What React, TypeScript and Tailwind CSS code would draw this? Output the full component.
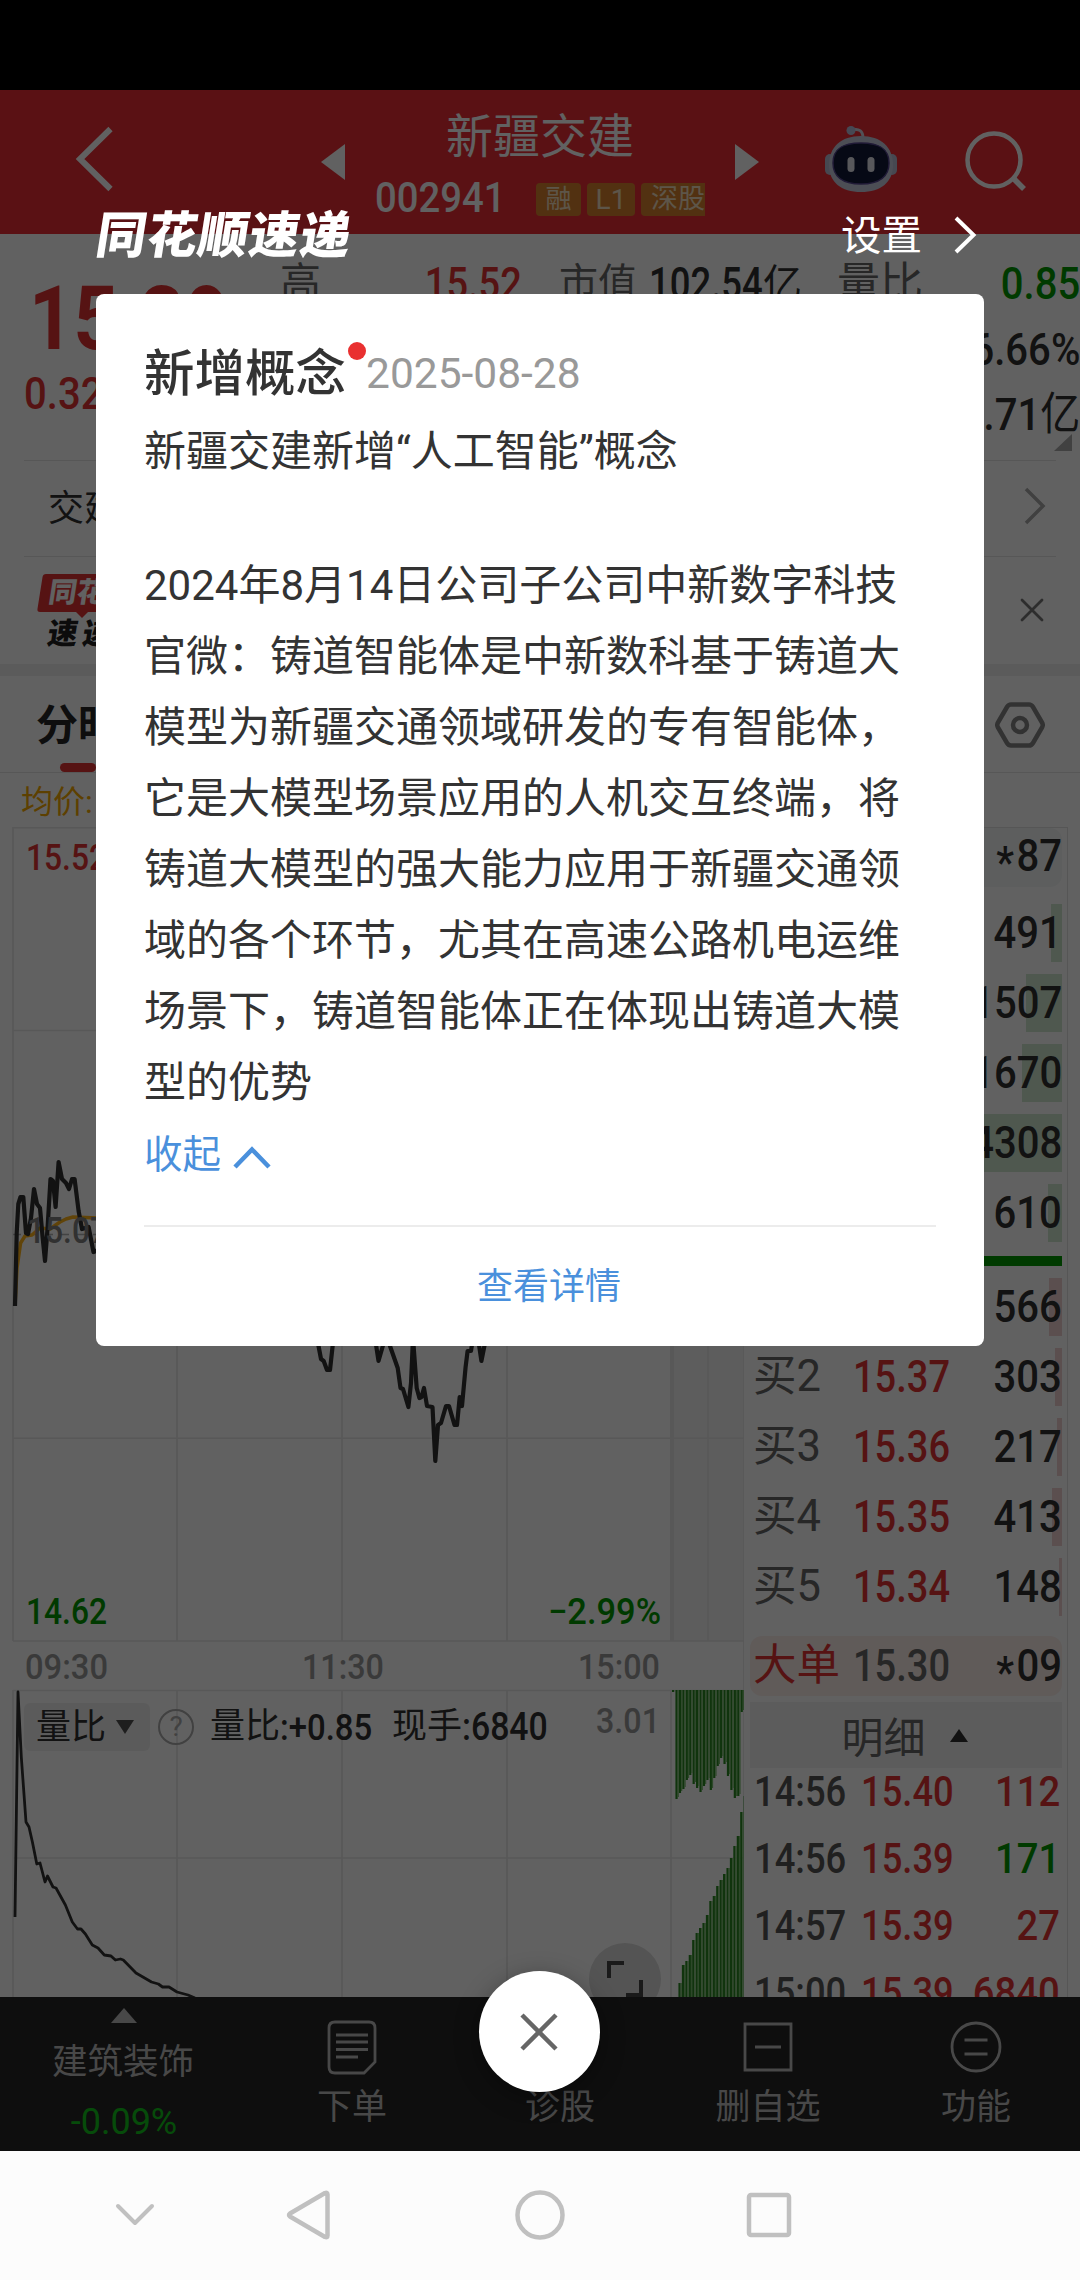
import { ReactNode } from "react"
import clsx from "clsx"

const INK = "#303030"
const RED = "#e23434"
const GREEN = "#009900"

type OrderRow = {
    label?: string
    price?: string
    volume: string
    bar: number
}

const SELLS: OrderRow[] = [
    { volume: "491", bar: 11 },
    { volume: "1507", bar: 36 },
    { volume: "1670", bar: 40 },
    { volume: "4308", bar: 100 },
    { volume: "610", bar: 14 },
]

const BUYS: OrderRow[] = [
    { volume: "566", bar: 13 },
    { label: "买2", price: "15.37", volume: "303", bar: 7 },
    { label: "买3", price: "15.36", volume: "217", bar: 5 },
    { label: "买4", price: "15.35", volume: "413", bar: 10 },
    { label: "买5", price: "15.34", volume: "148", bar: 3 },
]

const TICKS = [
    { time: "14:56", price: "15.40", volume: "112", up: true },
    { time: "14:56", price: "15.39", volume: "171", up: false },
    { time: "14:57", price: "15.39", volume: "27", up: true },
    { time: "15:00", price: "15.39", volume: "6840", up: true },
]

const PRICE_OPEN =
    "15,1306 16.7,1233 18.3,1204 20.5,1197 23.3,1197 26,1233 28,1234 31,1218 34,1189 37,1204 40,1208 42.5,1236 45,1261 47.5,1229 50.5,1179 53,1181 55.6,1207 58.6,1162 62,1179 66,1183 69,1189 72,1179 74.6,1179 78.6,1211 82,1229 88.6,1227 93.5,1252 98,1250"
const PRICE_LOWS = [
    "317,1338 321,1359 323.7,1361 327,1370 330,1370 333.5,1338",
    "375,1338 378.5,1361 386,1335 390,1346 397.7,1368 400.5,1388 403,1389 408.4,1407 411,1383 413,1338 416.7,1388 419.4,1398 421.5,1397 424,1388 427,1406 432.5,1407 435.3,1461 438,1425 441,1423 446,1406 449,1406 454.5,1425 457,1425 459.7,1397 462,1406 465.6,1367 467.6,1351 471,1351 473,1338",
    "478,1338 481.4,1361 486,1338",
]
const AVERAGE =
    "15,1306 17,1268 20.6,1243 25,1236 32,1235 40,1228 50,1229 60,1222 66,1219 73,1217 98,1218"
const VOLUME_RATIO =
    "15,1917 18,1692 21.3,1757 26,1822 29,1827 32.4,1842 36.8,1864 40,1863 45,1882 47.5,1876 53,1887 56,1888 65.4,1905 72.3,1922 77.5,1929 81,1929 85.4,1934 92.3,1945 98,1948 104.3,1955 111,1956 115.4,1960 120.5,1959 123.3,1960 136,1973 151.5,1982 158.4,1984 162.5,1987 169,1987 177,1992 188,1995 195,1998"

const TOP_BARS = [1692, 1799, 1793, 1789, 1780, 1775, 1784, 1788, 1792, 1786, 1780, 1790, 1778, 1766, 1758, 1764, 1776, 1790, 1798, 1796, 1712]
const BOTTOM_BARS = [1997, 1983, 1965, 1961, 1955, 1940, 1933, 1928, 1923, 1915, 1901, 1896, 1886, 1880, 1874, 1868, 1858, 1846, 1836, 1812, 1796]

const Num = ({ children, className, decimal }: { children: ReactNode; className?: string; decimal?: boolean }) => (
    <span className={clsx("inline-block font-medium whitespace-nowrap", decimal ? "scale-x-[0.845]" : "scale-x-[0.89]", className)}>
        {children}
    </span>
)

const Star = () => <span className="relative top-[7px] mr-[3px]">*</span>

const Header = () => (
    <header className="flex h-[144px] shrink-0 bg-[#ed2d35] text-white">
        <svg className="mt-[35px] ml-[74px] h-[68px] w-[40px]" viewBox="0 0 40 68" fill="none" stroke="currentColor" strokeWidth="6">
            <path d="M36.5 4 6 34l30.500 30" />
        </svg>
        <svg className="mt-[54px] ml-[207px] h-[36px] w-[24px]" viewBox="0 0 24 36" fill="currentColor">
            <path d="M24 0v36L0 18z" />
        </svg>
        <div className="ml-[30px] flex w-[330px] flex-col">
            <h1 className="mt-[21px] text-center text-[47px] leading-[52px]">新疆交建</h1>
            <div className="mt-[19px] flex h-[35px] items-center">
                <div className="w-[161px]">
                    <Num className="origin-left text-[43px] leading-[34px]">002941</Num>
                </div>
                <div className="flex gap-[6px] text-[26px] leading-[33px] text-[#f3dfc0]">
                    <span className="w-[45px] rounded-[4px] bg-[#d8822e] text-center">融</span>
                    <span className="w-[48px] rounded-[4px] bg-[#d8822e] text-center text-[28px]">L1</span>
                    <span className="w-[64px] rounded-l-[4px] bg-[#d8822e] pl-[10px] text-[27px] whitespace-nowrap">深股</span>
                </div>
            </div>
        </div>
        <svg className="mt-[54px] ml-[30px] h-[36px] w-[24px]" viewBox="0 0 24 36" fill="currentColor">
            <path d="M0 0v36l24-18z" />
        </svg>
        <svg className="mt-[35px] ml-[66px] h-[68px] w-[72px]" viewBox="0 0 72 68">
            <path d="M27 5c7-2 11 1 11 8" fill="none" stroke="#d5d5e4" strokeWidth="3" />
            <circle cx="26" cy="5.500" r="4.500" fill="#b9bfdc" />
            <rect x="0" y="29" width="10" height="21" rx="5" fill="#b9bdd6" />
            <rect x="62" y="29" width="10" height="21" rx="5" fill="#b9bdd6" />
            <path d="M36 11c20 0 32 11 32 29 0 17-12 27-32 27S4 57 4 40c0-18 12-29 32-29z" fill="#c9cce0" />
            <path d="M36 18c19 0 28 6 28 20 0 13-9 21-28 21S8 51 8 38c0-14 9-20 28-20z" fill="#101838" stroke="#55468f" strokeWidth="1.500" />
            <rect x="22.500" y="32" width="7" height="15" rx="3.500" fill="#e8e8ee" />
            <rect x="42.500" y="32" width="7" height="15" rx="3.500" fill="#e8e8ee" />
        </svg>
        <svg className="mt-[38px] ml-[68px] h-[64px] w-[62px]" viewBox="0 0 62 64" fill="none" stroke="currentColor" strokeWidth="4.500">
            <circle cx="29" cy="32" r="26.500" />
            <path d="m48 50 11 11" strokeWidth="5.500" />
        </svg>
    </header>
)

const Quote = () => (
    <section className="flex h-[226px] shrink-0 pt-[17px]">
        <div className="w-[280px] text-[#e23434]">
            <div className="mt-[28px] pl-[29px]">
                <span className="inline-block origin-left scale-x-[0.87] text-[89px] leading-[80px] font-bold">15.39</span>
            </div>
            <Num className="mt-[3px] ml-[24px] origin-left text-[45px] leading-[64px]">0.32</Num>
        </div>
        <div className="flex h-[65px] w-[242px] items-center justify-between text-[41px] text-[#666]">
            高
            <Num decimal className="origin-right text-[45px] text-[#e23434]">15.52</Num>
        </div>
        <div className="ml-[37px] flex h-[65px] items-center text-[39px] whitespace-nowrap text-[#666]">
            市值
            <div className="flex w-[200px] items-center pl-[12px] text-[#303030]">
                <div className="w-[114px]">
                    <span className="inline-block origin-left scale-x-[0.81] text-[45px] font-medium">102.54</span>
                </div>
                <span className="pt-[2px] text-[39px]">亿</span>
            </div>
        </div>
        <div className="flex flex-1 flex-col">
            <div className="flex h-[65px] items-center justify-between text-[43px] text-[#666]">
                量比
                <Num className="origin-right text-[45px] text-[#009900]">0.85</Num>
            </div>
            <div className="h-[65px] text-right text-[45px] leading-[67px] text-[#303030]">
                <Num className="origin-right">6.66%</Num>
            </div>
            <div className="h-[65px] text-right text-[45px] leading-[67px] text-[#303030]">
                <Num className="origin-right">6.71<span className="font-normal">亿</span></Num>
            </div>
        </div>
    </section>
)

const Links = () => (
    <section className="shrink-0">
        <div className="mx-[24px] flex h-[97px] items-center justify-between border-y border-[#e4e4e4] pr-[10px] pl-[24px] text-[36px] text-[#303030]">
            交建转债
            <svg className="-mt-[6px] h-[38px] w-[22px]" viewBox="0 0 22 38" fill="none" stroke="#a8a8a8" strokeWidth="3.500">
                <path d="m2 2 17 17L2 36" />
            </svg>
        </div>
        <div className="flex h-[107px] items-start justify-between pt-[17px] pr-[36px] pl-[40px]">
            <div className="w-[120px] text-[28px] font-black whitespace-nowrap">
                <div className="w-[110px] -skew-x-[9deg] rounded-[3px] bg-[#e23434] pl-[9px] leading-[38px] text-white">同花顺</div>
                <svg className="ml-[36px] h-[6px] w-[12px]" viewBox="0 0 12 6" fill={RED}>
                    <path d="M0 0h12L6 6z" />
                </svg>
                <div className="-skew-x-[9deg] pl-[8px] text-[30px] leading-[31px] tracking-[5px] text-[#202020]">速递</div>
            </div>
            <svg className="mt-[24px] h-[24px] w-[24px]" viewBox="0 0 24 24" fill="none" stroke="#777" strokeWidth="2.800" strokeLinecap="round">
                <path d="m2 2 20 20M22 2 2 22" />
            </svg>
        </div>
        <div className="h-[12px] bg-[#f0f0f0]" />
    </section>
)

const Tabs = () => (
    <section className="flex h-[97px] shrink-0 items-start justify-between border-b border-[#e4e4e4] pr-[35px] pl-[36px]">
        <div className="flex w-[84px] flex-col items-center">
            <span className="mt-[21px] text-[42px] leading-[58px] font-bold text-[#252525]">分时</span>
            <span className="mt-[8px] h-[9px] w-[36px] rounded-full bg-[#e23434]" />
        </div>
        <svg className="mt-[25px] h-[48px] w-[50px]" viewBox="0 0 50 48" fill="none" stroke="#858585" strokeWidth="4.500" strokeLinejoin="round">
            <path d="M16 3.500h18q2.500 0 4 2.500l9 15.500q1.500 2.500 0 5L38 42q-1.500 2.500-4 2.500H16q-2.500 0-4-2.500L3 26.500q-1.500-2.500 0-5L12 6q1.500-2.500 4-2.500z" />
            <circle cx="25" cy="24" r="7" />
        </svg>
    </section>
)

type LabelProps = { x: number; y: number; width: number; size?: number; color: string; children: string }

// y is the baseline of the label
const ChartLabel = ({ x, y, width, size = 36, color, children }: LabelProps) => (
    <text x={x} y={y} fill={color} fontSize={size} fontWeight={500} textLength={width} lengthAdjust="spacingAndGlyphs">
        {children}
    </text>
)

const Chart = () => (
    <div className="relative h-[1170px] w-[744px] shrink-0">
        <svg className="h-[1170px] w-[744px]" viewBox="0 827 744 1170" fill="none">
            <rect x="671" y="827" width="73" height="814" fill="#f5f5f5" />
            <g stroke="#e6e6e6" strokeWidth="1.600">
                <path d="M13 827.800H744M13 1030.500H744M13 1438.300H744M13 1641H744M13 1690.500H744M13 1858H744" />
                <path d="M13 827v814M177 827v814M342 827v814M507 827v814M708 827v814M744 827v1170" />
                <path d="M13 1690v307M177 1690v307M342 1690v307M507 1690v307M671 1690v307" />
                <path d="M672 827v814" strokeWidth="4" />
            </g>
            <path d="M13 1234.500H744" stroke="#b0b0b0" strokeWidth="1.600" strokeDasharray="8 8" />
            <g strokeLinejoin="round" strokeWidth="4.200">
                <polyline points={AVERAGE} stroke="#ffb31a" strokeWidth="3.500" />
                <polyline points={PRICE_OPEN} stroke={INK} />
                {PRICE_LOWS.map((points) => (
                    <polyline key={points} points={points} stroke={INK} />
                ))}
            </g>
            <polyline points={VOLUME_RATIO} stroke={INK} strokeWidth="2.800" strokeLinejoin="round" />
            {TOP_BARS.map((bottom, i) => (
                <rect key={i} x={672 + i * 3.43} y={1690} width={2.2} height={bottom - 1690} fill="#2a8a22" />
            ))}
            {TOP_BARS.map((bottom, i) => (
                <rect key={i} x={674.2 + i * 3.43} y={1690} width={1.2} height={Math.max(bottom - 1692, 0)} fill="#78bd6c" />
            ))}
            {BOTTOM_BARS.map((top, i) => (
                <rect key={i} x={675 + i * 3.43} y={top} width={2.2} height={1997 - top} fill="#2a8a22" />
            ))}
            {BOTTOM_BARS.map((top, i) => (
                <rect key={i} x={677.2 + i * 3.43} y={top} width={1.2} height={1997 - top} fill="#78bd6c" />
            ))}
            <ChartLabel x={26} y={870} width={81} color={RED}>15.52</ChartLabel>
            <ChartLabel x={27} y={1243} width={81} color="#808080">15.07</ChartLabel>
            <ChartLabel x={26} y={1624} width={81} color={GREEN}>14.62</ChartLabel>
            <ChartLabel x={548} y={1624} width={113} color={GREEN}>−2.99%</ChartLabel>
            <ChartLabel x={25} y={1679} width={83} size={35} color="#999999">09:30</ChartLabel>
            <ChartLabel x={302} y={1679} width={82} size={35} color="#999999">11:30</ChartLabel>
            <ChartLabel x={578} y={1679} width={82} size={35} color="#999999">15:00</ChartLabel>
            <ChartLabel x={596} y={1733} width={64} size={35} color="#999999">3.01</ChartLabel>
        </svg>
        <div className="absolute top-[876px] left-[24px] flex h-[48px] items-center whitespace-nowrap text-[#303030]">
            <div className="flex h-[48px] w-[126px] items-center rounded-[6px] bg-[#f0f0f0] pt-[2px] pl-[12px] text-[35px]">
                量比
                <svg className="-mt-[2px] ml-[10px] h-[14px] w-[18px]" viewBox="0 0 18 14" fill="#505050">
                    <path d="M0 0h18L9 14z" />
                </svg>
            </div>
            <div className="ml-[8px] flex h-[36px] w-[36px] items-center justify-center rounded-full border-[2.500px] border-[#aaa] text-[28px] text-[#aaa]">?</div>
            <div className="ml-[16px] flex w-[182px] items-center pt-[1px] text-[35px]">
                量比<Num className="origin-left text-[37px]">:+0.85</Num>
            </div>
            <div className="flex items-center pt-[1px] text-[35px]">
                现手<Num className="origin-left text-[38px]">:6840</Num>
            </div>
        </div>
        <div className="absolute top-[1116px] left-[589px] h-[72px] w-[72px] rounded-full bg-[#dcdcdc] pt-[16px] pl-[16px]">
            <svg className="h-[40px] w-[40px]" viewBox="0 0 40 40" fill="none" stroke="#444" strokeWidth="4">
                <path d="M4 19V4h15M36 21v15H21" />
            </svg>
        </div>
    </div>
)

const BookRow = ({ row, barClass }: { row: OrderRow; barClass: string }) => (
    <div className="flex h-[70px] items-center">
        <span className="w-[100px] text-[43.500px] text-[#666]">{row.label}</span>
        <span className="w-[110px] text-[45px] text-[#e23434]">
            <Num decimal className="origin-left">{row.price}</Num>
        </span>
        <div className="relative flex h-[58px] flex-1 items-center justify-end text-[45px] text-[#303030]">
            <span className={clsx("absolute inset-y-0 right-0", barClass)} style={{ width: row.bar }} />
            <Num className="relative origin-right">{row.volume}</Num>
        </div>
    </div>
)

const OrderBook = () => (
    <div className="flex h-[1170px] w-[324px] flex-col overflow-hidden border-t border-r border-[#e2e2e2] pr-[5px] pl-[6px]">
        <div className="flex h-[59px] shrink-0 items-center justify-end rounded-[12px] bg-[#f3f8f8] pb-[3px] text-[45px] text-[#303030]">
            <Num className="origin-right"><Star />87</Num>
        </div>
        <div className="mt-[11px] pl-[3px]">
            {SELLS.map((row) => (
                <BookRow key={row.volume} row={row} barClass="bg-[#cfe6cf]" />
            ))}
        </div>
        <div className="mt-[8px] h-[10px] shrink-0 bg-[#009900]" />
        <div className="mt-[6px] pl-[3px]">
            {BUYS.map((row) => (
                <BookRow key={row.volume} row={row} barClass="bg-[#f0d0d0]" />
            ))}
        </div>
        <div className="mt-[14px] flex h-[60px] shrink-0 items-center rounded-[12px] bg-[#fbeeeb] pl-[3px]">
            <span className="w-[100px] text-[43.500px] whitespace-nowrap text-[#e23434]">大单</span>
            <Num decimal className="w-[113px] origin-left text-[45px] text-[#666]">15.30</Num>
            <span className="flex flex-1 justify-end">
                <Num className="origin-right text-[45px] text-[#303030]"><Star />09</Num>
            </span>
        </div>
        <div className="mt-[6px] flex h-[66px] shrink-0 items-center justify-center gap-[24px] bg-[#f2f2f2] pt-[6px] pr-[3px] text-[42px] text-[#666]">
            明细
            <svg className="-mt-[5px] h-[13px] w-[18px]" viewBox="0 0 18 13" fill={INK}>
                <path d="M9 0l9 13H0z" />
            </svg>
        </div>
        <div className="-mt-[10px] pr-[2px] pl-[4px] text-[43px]">
            {TICKS.map((tick) => (
                <div key={tick.time + tick.volume} className="flex h-[67px] items-center">
                    <span className="w-[107px] text-[#555]">
                        <Num decimal className="origin-left">{tick.time}</Num>
                    </span>
                    <span className="w-[90px] text-[#e23434]">
                        <Num decimal className="origin-left">{tick.price}</Num>
                    </span>
                    <span className={clsx("flex flex-1 justify-end", tick.up ? "text-[#e23434]" : "text-[#009900]")}>
                        <Num className="origin-right">{tick.volume}</Num>
                    </span>
                </div>
            ))}
        </div>
    </div>
)

const Toolbar = () => (
    <nav className="flex h-[154px] shrink-0 bg-[#252525] text-[35px] leading-[40px] text-[#bdbdbd]">
        <div className="flex w-[248px] flex-col items-center">
            <svg className="mt-[11px] h-[15px] w-[26px]" viewBox="0 0 26 15" fill="currentColor">
                <path d="M13 0l13 15H0z" />
            </svg>
            <span className="mt-[19px] pr-[2px] text-[35.500px]">建筑装饰</span>
            <span className="mt-[20px] text-[36px] text-[#12c41c]">-0.09%</span>
        </div>
        <div className="flex w-[208px] flex-col items-center pt-[22px]">
            <svg className="h-[58px] w-[50px]" viewBox="0 0 50 58" fill="none" stroke="currentColor" strokeWidth="2.800">
                <path d="M8 3h34q6 0 6 6v34L37 54H8q-6 0-6-6V9q0-6 6-6z" />
                <path d="M9 16h32M9 23h32M9 30.500h32M9 38h22" />
            </svg>
            <span className="mt-[11px]">下单</span>
        </div>
        <div className="flex w-[208px] flex-col items-center pt-[91px]">
            <span>诊股</span>
        </div>
        <div className="flex w-[208px] flex-col items-center pt-[25px]">
            <svg className="h-[50px] w-[50px]" viewBox="0 0 50 50" fill="none" stroke="currentColor" strokeWidth="2.800">
                <path d="M2 2h46v46H2zM12 25h26" />
            </svg>
            <span className="mt-[16px]">删自选</span>
        </div>
        <div className="flex w-[208px] flex-col items-center pt-[24px]">
            <svg className="h-[52px] w-[52px]" viewBox="0 0 52 52" fill="none" stroke="currentColor" strokeWidth="2.800">
                <circle cx="26" cy="26" r="24" />
                <path d="M14.500 19h23M14.500 33h23" />
            </svg>
            <span className="mt-[15px]">功能</span>
        </div>
    </nav>
)

const SystemBar = () => (
    <footer className="flex h-[129px] shrink-0 items-center bg-[#fcfcfc] pb-[2px] pl-[115px] text-[#c0c0c0]">
        <svg className="h-[24px] w-[40px]" viewBox="0 0 40 24" fill="none" stroke="currentColor" strokeWidth="4" strokeLinecap="round" strokeLinejoin="round">
            <path d="m3 3 17 17L37 3" />
        </svg>
        <svg className="ml-[130px] h-[52px] w-[46px]" viewBox="0 0 46 52" fill="none" stroke="currentColor" strokeWidth="4.500" strokeLinejoin="round">
            <path d="M42.500 5.500v41q0 2.500-2.500 1.500L5 27.500q-2-1.500 0-3L40 4q2.500-1 2.500 1.500z" />
        </svg>
        <svg className="ml-[183px] h-[52px] w-[52px]" viewBox="0 0 52 52" fill="none" stroke="currentColor" strokeWidth="4.500">
            <circle cx="26" cy="26" r="22.500" />
        </svg>
        <svg className="ml-[180px] h-[46px] w-[46px]" viewBox="0 0 46 46" fill="none" stroke="currentColor" strokeWidth="4.500">
            <rect x="3" y="3" width="40" height="40" rx="2" />
        </svg>
    </footer>
)

const ConceptDialog = () => (
    <div className="absolute top-[90px] left-0 h-[2061px] w-[1080px] bg-black/62">
        <div className="flex h-[2061px] flex-col items-center">
            <div className="mt-[114px] flex h-[90px] w-[888px] items-start justify-between text-white">
                <h2 className="-skew-x-[9deg] pt-[4px] pl-[1px] text-[50px] leading-[56px] font-black tracking-[1px]">同花顺速递</h2>
                <div className="flex items-center pt-[7px] pr-[7px] text-[40.500px] leading-[50px]">
                    设置
                    <svg className="-mt-[2px] ml-[32px] h-[38px] w-[23px]" viewBox="0 0 23 38" fill="none" stroke="currentColor" strokeWidth="4">
                        <path d="m2 2 17.500 17L2 36" />
                    </svg>
                </div>
            </div>
            <article className="flex h-[1052px] w-[888px] flex-col rounded-[8px] bg-white px-[48px] text-[42px] text-[#333]">
                <div className="mt-[45px] flex h-[70px] items-center">
                    <h3 className="relative text-[50.500px] leading-[70px] font-medium">
                        新增概念
                        <span className="absolute top-[3px] -right-[20px] h-[18px] w-[18px] rounded-full bg-[#e93030]" />
                    </h3>
                    <time className="ml-[20px] pb-[1px] text-[42.500px] text-[#999]">2025-08-28</time>
                </div>
                <p className="mt-[7px] leading-[71px]">新疆交建新增“人工智能”概念</p>
                <p className="mt-[63px] w-[762px] leading-[71px]">
                    2024年8月14日公司子公司中新数字科技官微：铸道智能体是中新数科基于铸道大模型为新疆交通领域研发的专有智能体，它是大模型场景应用的人机交互终端，将铸道大模型的强大能力应用于新疆交通领域的各个环节，尤其在高速公路机电运维场景下，铸道智能体正在体现出铸道大模型的优势
                </p>
                <div className="mt-[12px] flex items-center text-[38.500px] leading-[50px] text-[#4a90dc]">
                    收起
                    <svg className="mt-[3px] ml-[12px] h-[24px] w-[38px]" viewBox="0 0 38 24" fill="none" stroke="currentColor" strokeWidth="4.500">
                        <path d="M2 22 19 4.500 36 22" />
                    </svg>
                </div>
                <button className="mt-[45px] border-t-2 border-[#ececec] pt-[35px] text-center text-[36px] leading-[50px] text-[#4a90dc]">
                    <span className="pl-[18px]">查看详情</span>
                </button>
            </article>
            <button className="mt-[625px] mr-[2px] flex h-[121px] w-[121px] items-center justify-center rounded-full bg-white shadow-[0_6px_24px_rgba(0,0,0,0.35)]">
                <svg className="h-[38px] w-[38px]" viewBox="0 0 38 38" fill="none" stroke="#666" strokeWidth="4.500">
                    <path d="m2 2 34 34M36 2 2 36" />
                </svg>
            </button>
        </div>
    </div>
)

const App = () => (
    <div className="relative flex h-[2280px] w-[1080px] flex-col overflow-hidden bg-white font-[Roboto,'Noto_Sans_CJK_SC',sans-serif]">
        <div className="h-[90px] shrink-0 bg-black" />
        <Header />
        <Quote />
        <Links />
        <Tabs />
        <div className="h-[54px] shrink-0 pl-[21px] text-[32px] leading-[59px] text-[#f5a800]">均价:</div>
        <div className="flex h-[1170px] shrink-0 overflow-hidden">
            <Chart />
            <OrderBook />
        </div>
        <Toolbar />
        <SystemBar />
        {/* corner marker of the expandable quote block */}
        <svg className="absolute top-[434px] left-[1054px] h-[17px] w-[18px]" viewBox="0 0 18 17" fill="#aaa">
            <path d="M18 0v17H0z" />
        </svg>
        <ConceptDialog />
    </div>
)

export default App
